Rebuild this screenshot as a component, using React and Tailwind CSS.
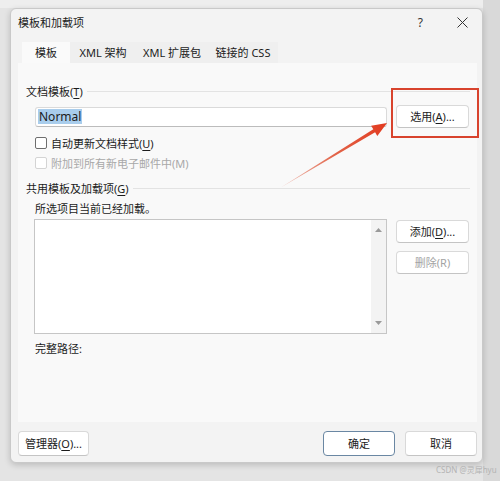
import React from "react";

const F = { fontFamily: '"Noto Sans", "Noto Sans CJK SC", sans-serif' };

function Btn({ children, className = "", disabled = false, primary = false }) {
  return (
    <div
      className={
        "flex items-center justify-center rounded-[4px] bg-white text-[11px] leading-none " +
        (primary ? "border border-[#6a87a3] " : "border border-[#d9d9d9] border-b-[#c4c4c4] ") +
        (disabled ? "text-[#a3a3a3] " : "text-[#1b1b1b] ") +
        className
      }
    >
      {children}
    </div>
  );
}

function U({ children }) {
  return <span className="underline underline-offset-[2px]">{children}</span>;
}

function Check({ label, disabled }) {
  return (
    <div className="flex items-center h-[16px]">
      <div
        className={
          "w-[12px] h-[12px] rounded-[2px] border bg-white " +
          (disabled ? "border-[#d4d4d4]" : "border-[#6e6e6e]")
        }
      />
      <span className={"ml-[4px] text-[11px] leading-none " + (disabled ? "text-[#a8a8a8]" : "text-[#1b1b1b]")}>
        {label}
      </span>
    </div>
  );
}

function GroupHeader({ label }) {
  return (
    <div className="flex items-center h-[14px] pl-[8px] pr-[7px]">
      <span className="text-[11px] leading-none text-[#1b1b1b] whitespace-nowrap">{label}</span>
      <div className="flex-1 h-px bg-[#e3e3e3] ml-[4px]" />
    </div>
  );
}

export default function App() {
  return (
    <div className="relative w-[500px] h-[481px] overflow-hidden bg-[#e4e4e4]" style={F}>
      <div className="absolute inset-x-0 top-0 h-[8px] bg-[#eeeeee]" />
      <div className="absolute right-0 top-0 w-[17px] h-full bg-[#d9d9d9]" />
      <div className="pl-[10px] pt-[8px]">
        <div className="relative w-[473px] h-[455px] bg-[#f3f3f3] border border-[#c9c9c9] rounded-[6px] shadow-[0_2px_6px_rgba(0,0,0,0.18)] flex flex-col">
          {/* title bar */}
          <div className="flex items-center h-[27px] pl-[7px] pr-[12px]">
            <span className="text-[11px] leading-none text-[#1b1b1b]">模板和加载项</span>
            <div className="flex-1" />
            <span className="text-[12px] leading-none text-[#333] mr-[34px]">?</span>
            <svg width="11" height="11" viewBox="0 0 11 11" className="mr-[2px]">
              <path d="M0.5 0.5 L10.5 10.5 M10.5 0.5 L0.5 10.5" stroke="#333" strokeWidth="1" />
            </svg>
          </div>
          {/* tabs */}
          <div className="flex ml-[11px] mt-[6px] h-[21px]">
            <div className="w-[48px] flex items-center justify-center bg-[#fafafa] text-[11px] text-[#1b1b1b] leading-none">模板</div>
            <div className="w-[66px] flex items-center justify-center bg-[#efefef] text-[11px] text-[#1b1b1b] leading-none">XML 架构</div>
            <div className="w-[72px] flex items-center justify-center bg-[#efefef] text-[11px] text-[#1b1b1b] leading-none">XML 扩展包</div>
            <div className="w-[70px] flex items-center justify-center bg-[#efefef] text-[11px] text-[#1b1b1b] leading-none">链接的 CSS</div>
          </div>
          {/* panel */}
          <div className="ml-[7px] w-[459px] h-[359px] bg-[#f9f9f9] pt-[21px]">
            <GroupHeader label={<>文档模板(<U>T</U>)</>} />
            <div className="flex items-center h-[23px] mt-[7px] pl-[17px]">
              <div className="w-[352px] h-[20px] bg-white border border-[#dadada] border-b-[#bcbcbc] rounded-[3px] flex items-center pl-[2px]">
                <span className="bg-[#a9cdec] text-[12px] leading-[15px] text-[#1b1b1b] px-[1px]">Normal</span>
              </div>
              <Btn className="ml-[9px] w-[73px] h-[23px]">选用(<U>A</U>)...</Btn>
            </div>
            <div className="pl-[17px] mt-[7px]">
              <Check label={<>自动更新文档样式(<U>U</U>)</>} />
            </div>
            <div className="pl-[17px] mt-[4px]">
              <Check label="附加到所有新电子邮件中(M)" disabled />
            </div>
            <div className="mt-[10px]">
              <GroupHeader label={<>共用模板及加载项(<U>G</U>)</>} />
            </div>
            <div className="pl-[17px] mt-[6px] h-[14px] flex items-center text-[11px] leading-none text-[#1b1b1b]">
              所选项目当前已经加载。
            </div>
            <div className="flex mt-[4px] pl-[16px]">
              <div className="w-[353px] h-[115px] bg-white border border-[#c6c6c6] flex justify-end">
                <div className="w-[15px] h-full bg-[#f3f3f3] flex flex-col items-center justify-between py-[8px]">
                  <svg width="7" height="4" viewBox="0 0 7 4"><path d="M0 4 L3.5 0 L7 4 Z" fill="#9a9a9a" /></svg>
                  <svg width="7" height="4" viewBox="0 0 7 4"><path d="M0 0 L3.5 4 L7 0 Z" fill="#9a9a9a" /></svg>
                </div>
              </div>
              <div className="ml-[9px] flex flex-col">
                <Btn className="w-[73px] h-[23px] mt-[1px]">添加(<U>D</U>)...</Btn>
                <Btn className="w-[73px] h-[23px] mt-[8px]" disabled>删除(R)</Btn>
              </div>
            </div>
            <div className="pl-[17px] mt-[7px] h-[14px] flex items-center text-[11px] leading-none text-[#1b1b1b]">
              完整路径:
            </div>
          </div>
          {/* bottom buttons */}
          <div className="flex ml-[7px] mt-[9px] h-[25px]">
            <Btn className="w-[71px] h-[25px]">管理器(<U>O</U>)...</Btn>
            <div className="flex-1" />
            <Btn className="w-[72px] h-[25px]" primary>确定</Btn>
            <Btn className="w-[72px] h-[25px] ml-[10px] mr-[5px]">取消</Btn>
          </div>
        </div>
      </div>
      {/* annotation */}
      <div className="absolute left-[391px] top-[88px] w-[88px] h-[50px] border-2 border-[#d8432d]" />
      <svg className="absolute left-0 top-0" width="500" height="481" viewBox="0 0 500 481">
        <defs>
          <linearGradient id="ag" x1="280" y1="188" x2="387" y2="123" gradientUnits="userSpaceOnUse">
            <stop offset="0" stopColor="#f0c8c0" />
            <stop offset="0.5" stopColor="#e2654a" />
            <stop offset="1" stopColor="#e23a1f" />
          </linearGradient>
        </defs>
        <polygon points="280,188 375.1,132.3 377.3,135.9 387,123 371.1,125.7 373.3,129.3" fill="url(#ag)" />
      </svg>
      <div className="absolute left-[436px] top-[466px] whitespace-nowrap text-[8px] leading-none text-[#b3b3b3]">CSDN @灵犀hyu</div>
    </div>
  );
}
